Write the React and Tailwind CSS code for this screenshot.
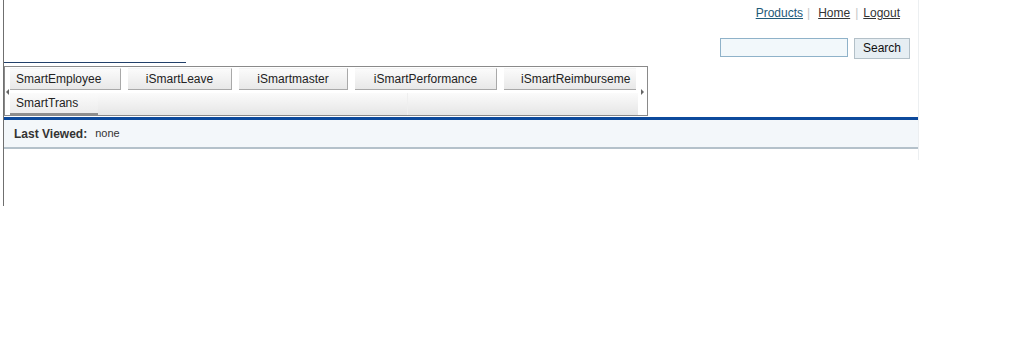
import React from 'react';

const tabs = [
    { label: 'SmartEmployee', w: 'w-[111px]', align: 'justify-start pl-[6px]', edge: 'border-r' },
    { label: 'iSmartLeave', w: 'w-[104px]', align: 'justify-center', edge: 'border-r' },
    { label: 'iSmartmaster', w: 'w-[109px]', align: 'justify-center', edge: 'border-r' },
    { label: 'iSmartPerformance', w: 'w-[142px]', align: 'justify-center', edge: 'border-r' },
    { label: 'iSmartReimburseme', w: 'w-[132px]', align: 'justify-start pl-[17px]', edge: 'border-r-0' },
];

const App = () => {
    return (
        <div className="bg-white w-[1024px] h-[347px] font-['Liberation_Sans',Arial,sans-serif] text-[12px] text-[#222]">
            <div className="ml-[3px] w-[916px] h-[206px] border-l border-[#6f6f6f]">
                <div className="h-[160px] border-r border-[#eceff1]">
                    {/* top links */}
                    <div className="h-[62px] flex flex-col items-end pr-[18px]">
                        <div className="flex items-center h-[14px] mt-[6px] leading-[14px]">
                            <a className="underline text-[#1d5a78]">Products</a>
                            <span className="text-[#c6c6c6] px-[4px]">|</span>
                            <a className="underline text-[#333] ml-[4px]">Home</a>
                            <span className="text-[#c6c6c6] px-[5px]">|</span>
                            <a className="underline text-[#333]">Logout</a>
                        </div>
                        <div className="flex items-start mt-[18px] mr-[-10px]">
                            <input className="w-[128px] h-[19px] border border-[#8fb2c9] bg-[#f2f8fb] outline-none" />
                            <button className="ml-[6px] w-[56px] h-[21px] border border-[#b3c0c8] bg-[#e6eef3] text-[12px] text-[#111] leading-[19px]">Search</button>
                        </div>
                    </div>
                    <div className="w-[182px] h-[1px] bg-[#22406a]" />

                    {/* tab box */}
                    <div className="mt-[3px] w-[644px] h-[50px] border border-[#8a8a8a] flex items-center">
                        <div className="w-[5px] flex justify-center pt-[1px]">
                            <div className="w-0 h-0 border-y-[3px] border-y-transparent border-r-[3px] border-r-[#666]" />
                        </div>
                        <div className="w-[628px] h-full flex flex-col pt-[1px] overflow-hidden">
                            <div className="flex gap-[7px] h-[22px]">
                                {tabs.map((t) => (
                                    <div key={t.label} className={`${t.w} ${t.edge} shrink-0 h-[22px] flex items-center ${t.align} whitespace-nowrap bg-gradient-to-b from-[#fbfbfb] to-[#e8e8e8] border-b border-[#a9a9a9] border-t border-t-[#f4f4f4] text-[#222]`}>
                                        {t.label}
                                    </div>
                                ))}
                            </div>
                            <div className="mt-[3px] flex h-[22px]">
                                <div className="w-[88px] h-[22px] flex items-center pl-[6px] bg-gradient-to-b from-[#fbfbfb] to-[#ececec] border-b-2 border-[#8e8e8e]">
                                    SmartTrans
                                </div>
                                <div className="w-[310px] h-[22px] bg-gradient-to-b from-[#fbfbfb] to-[#e6e6e6] border-r border-[#efefef]" />
                                <div className="flex-1 h-[22px] bg-gradient-to-b from-[#fbfbfb] to-[#e6e6e6]" />
                            </div>
                        </div>
                        <div className="flex-1 flex justify-center pt-[1px]">
                            <div className="w-0 h-0 border-y-[3px] border-y-transparent border-l-[3px] border-l-[#666]" />
                        </div>
                    </div>

                    {/* last viewed */}
                    <div className="mt-[1px] h-[3px] bg-[#0d4a9c]" />
                    <div className="h-[29px] bg-[#f3f7fa] border-b-2 border-[#b4c1ca] flex items-center pl-[10px]">
                        <span className="font-bold text-[#333] text-[12px]">Last Viewed:</span>
                        <span className="ml-[8px] text-[#333] text-[11px]">none</span>
                    </div>
                </div>
            </div>
        </div>
    );
};

export default App;
